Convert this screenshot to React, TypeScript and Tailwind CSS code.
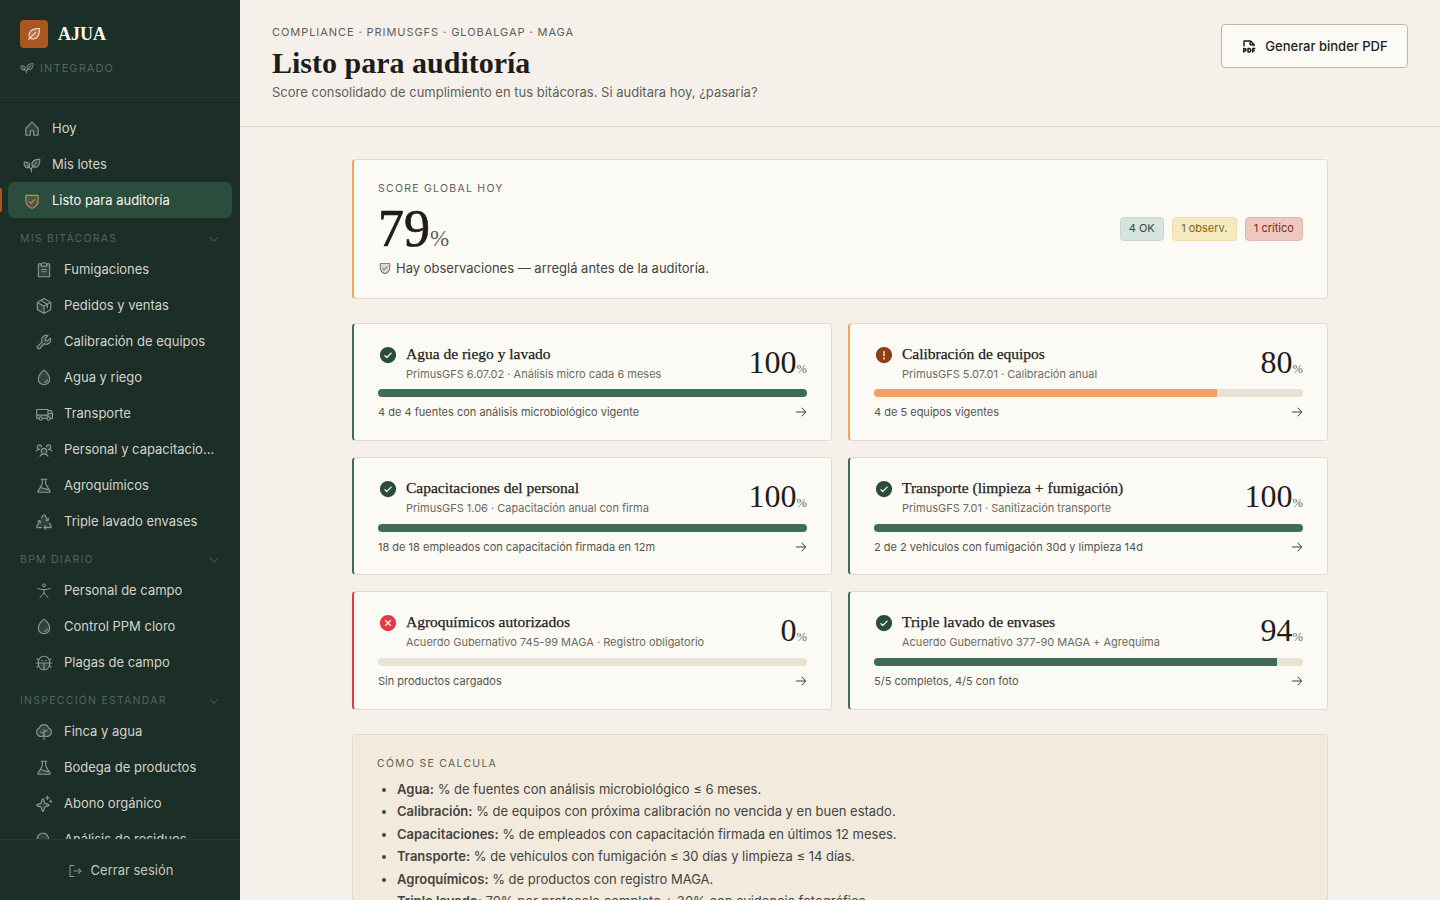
import type { ComponentType, ReactNode } from "react";
import {
  PiArrowRight,
  PiBugDuotone,
  PiCaretDown,
  PiCheckCircleFill,
  PiClipboardTextDuotone,
  PiDropDuotone,
  PiFilePdfBold,
  PiFlaskDuotone,
  PiHouseDuotone,
  PiLeafDuotone,
  PiMagnifyingGlassDuotone,
  PiPackageDuotone,
  PiPlantDuotone,
  PiRecycleDuotone,
  PiShieldCheckDuotone,
  PiSignOut,
  PiSparkleDuotone,
  PiTreeDuotone,
  PiTruckDuotone,
  PiUsersThreeDuotone,
  PiWarningCircleFill,
  PiWrenchDuotone,
  PiXCircleFill,
} from "react-icons/pi";

type Icon = ComponentType<{ className?: string }>;

const sans = "font-['Inter','Liberation_Sans',sans-serif]";
const serif = "font-['Liberation_Serif',serif]";

// stick figure with open arms, the icon packs only have a star-like one
function FieldWorker({ className }: { className?: string }) {
  return (
    <svg viewBox="0 0 24 24" fill="none" stroke="currentColor" strokeWidth="1.3" strokeLinecap="round" strokeLinejoin="round" className={className}>
      <circle cx="12" cy="4.5" r="2" />
      <path d="M3.5 8.5c5.5 2.4 11.5 2.4 17 0" />
      <path d="M12 10.2V14.5" />
      <path d="M12 14.5l-5.5 6.5" />
      <path d="M12 14.5l5.5 6.5" />
    </svg>
  );
}

const sections: { title: string; items: [string, Icon][] }[] = [
  {
    title: "MIS BITÁCORAS",
    items: [
      ["Fumigaciones", PiClipboardTextDuotone],
      ["Pedidos y ventas", PiPackageDuotone],
      ["Calibración de equipos", PiWrenchDuotone],
      ["Agua y riego", PiDropDuotone],
      ["Transporte", PiTruckDuotone],
      ["Personal y capacitaciones", PiUsersThreeDuotone],
      ["Agroquímicos", PiFlaskDuotone],
      ["Triple lavado envases", PiRecycleDuotone],
    ],
  },
  {
    title: "BPM DIARIO",
    items: [
      ["Personal de campo", FieldWorker],
      ["Control PPM cloro", PiDropDuotone],
      ["Plagas de campo", PiBugDuotone],
    ],
  },
  {
    title: "INSPECCIÓN ESTÁNDAR",
    items: [
      ["Finca y agua", PiTreeDuotone],
      ["Bodega de productos", PiFlaskDuotone],
      ["Abono orgánico", PiSparkleDuotone],
      ["Análisis de residuos", PiMagnifyingGlassDuotone],
    ],
  },
];

type Status = "ok" | "warn" | "bad";

const checks: { title: string; sub: string; pct: number; note: string; status: Status }[] = [
  { title: "Agua de riego y lavado", sub: "PrimusGFS 6.07.02 · Análisis micro cada 6 meses", pct: 100, note: "4 de 4 fuentes con análisis microbiológico vigente", status: "ok" },
  { title: "Calibración de equipos", sub: "PrimusGFS 5.07.01 · Calibración anual", pct: 80, note: "4 de 5 equipos vigentes", status: "warn" },
  { title: "Capacitaciones del personal", sub: "PrimusGFS 1.06 · Capacitación anual con firma", pct: 100, note: "18 de 18 empleados con capacitación firmada en 12m", status: "ok" },
  { title: "Transporte (limpieza + fumigación)", sub: "PrimusGFS 7.01 · Sanitización transporte", pct: 100, note: "2 de 2 vehículos con fumigación 30d y limpieza 14d", status: "ok" },
  { title: "Agroquímicos autorizados", sub: "Acuerdo Gubernativo 745-99 MAGA · Registro obligatorio", pct: 0, note: "Sin productos cargados", status: "bad" },
  { title: "Triple lavado de envases", sub: "Acuerdo Gubernativo 377-90 MAGA + Agrequima", pct: 94, note: "5/5 completos, 4/5 con foto", status: "ok" },
];

const statusStyle = {
  ok: { edge: "border-l-[#3f6b57]", bar: "bg-[#3f6b57]", icon: PiCheckCircleFill, color: "text-[#2a4d3e]" },
  warn: { edge: "border-l-[#f4a261]", bar: "bg-[#f4a261]", icon: PiWarningCircleFill, color: "text-[#8c3f10]" },
  bad: { edge: "border-l-[#e63946]", bar: "bg-[#e63946]", icon: PiXCircleFill, color: "text-[#e63946]" },
};

const rules: [string, string][] = [
  ["Agua:", "% de fuentes con análisis microbiológico ≤ 6 meses."],
  ["Calibración:", "% de equipos con próxima calibración no vencida y en buen estado."],
  ["Capacitaciones:", "% de empleados con capacitación firmada en últimos 12 meses."],
  ["Transporte:", "% de vehículos con fumigación ≤ 30 días y limpieza ≤ 14 días."],
  ["Agroquímicos:", "% de productos con registro MAGA."],
  ["Triple lavado:", "70% por protocolo completo + 30% con evidencia fotográfica."],
];

function NavRow({ label, icon: Icon, indent }: { label: string; icon: Icon; indent?: boolean }) {
  return (
    <div className={`flex h-9 items-center gap-[11px] rounded-md pr-3 text-[13px] text-[#d6d3ca] ${indent ? "pl-[27px]" : "pl-[15px]"}`}>
      <Icon className="h-[18px] w-[18px] shrink-0 text-[#8b9a92]" />
      <span className="truncate">{label}</span>
    </div>
  );
}

function Pill({ className, children }: { className: string; children: ReactNode }) {
  return <span className={`flex h-6 items-center rounded-[4px] border px-[8.2px] pb-[1px] text-[11px] ${className}`}>{children}</span>;
}

function Sidebar() {
  return (
    <aside className="flex h-full w-60 shrink-0 flex-col bg-[#1b2e27]">
      <div className="h-[98px] shrink-0 border-b border-[#26392f] px-5 pt-5">
        <div className="flex items-center gap-2.5">
          <div className="flex h-7 w-7 items-center justify-center rounded bg-[#a9561f]">
            <PiLeafDuotone className="h-4 w-4 text-[#f5f1ea]" />
          </div>
          <span className={`${serif} text-[18px] font-bold leading-7 text-[#faf8f2]`}>AJUA</span>
        </div>
        <div className="mt-[11px] flex items-center gap-1.5 text-[11px] leading-[18px] tracking-[0.1em] text-[#55645c]">
          <PiPlantDuotone className="h-3.5 w-3.5 text-[#7d8d85]" />
          INTEGRADO
        </div>
      </div>
      <nav className="min-h-0 flex-1 overflow-hidden px-2 pt-3">
        <div className="pt-[1px]">
          <NavRow label="Hoy" icon={PiHouseDuotone} />
        </div>
        <NavRow label="Mis lotes" icon={PiPlantDuotone} />
        <div className="relative -mt-[1px] pb-[1px]">
          <div className="absolute -left-2 top-1.5 h-6 w-0.5 rounded-r bg-[#a9561f]" />
          <div className="flex h-9 items-center gap-[11px] rounded-md bg-[#2a4d3e] pl-[15px] pr-3 pt-[1px] text-[13px] text-[#faf8f2]">
            <PiShieldCheckDuotone className="h-[18px] w-[18px] text-[#c98a5e]" />
            Listo para auditoría
          </div>
        </div>
        {sections.map((s) => (
          <div key={s.title}>
            <div className="mt-[6px] flex h-[23px] items-center justify-between pl-3 pr-3 pt-[5px] text-[10.5px] tracking-[0.12em] text-[#55645c]">
              {s.title}
              <PiCaretDown className="h-3 w-3" />
            </div>
            <div className="mt-[4px]">
              {s.items.map(([label, icon]) => (
                <NavRow key={label} label={label} icon={icon} indent />
              ))}
            </div>
          </div>
        ))}
      </nav>
      <div className="flex h-[61px] shrink-0 items-center justify-center gap-2 border-t border-[#26392f] pt-[1px] text-[13px] text-[#c7c8bf]">
        <PiSignOut className="h-4 w-4 text-[#8b9a92]" />
        Cerrar sesión
      </div>
    </aside>
  );
}

function CheckCard({ c }: { c: (typeof checks)[number] }) {
  const st = statusStyle[c.status];
  const StatusIcon = st.icon;
  return (
    <div className={`rounded-[4px] border border-l-2 border-[#e2dccd] bg-[#fbfaf5] px-6 pb-[18.8px] pt-5 ${st.edge}`}>
      <div className="flex h-[39px] items-start justify-between">
        <div className="flex gap-2">
          <StatusIcon className={`mt-[1px] h-5 w-5 shrink-0 ${st.color}`} />
          <div>
            <div className={`${serif} text-[15.5px] leading-[20px] text-[#1d1d1b] [-webkit-text-stroke:0.25px_#1d1d1b]`}>{c.title}</div>
            <div className="mt-[1px] text-[11px] leading-[18px] text-[#6b6b63]">{c.sub}</div>
          </div>
        </div>
        <div className={`${serif} -mt-[0.4px] flex h-[38px] items-baseline leading-[36px] text-[#1d1d1b]`}>
          <span className="text-[32px]">{c.pct}</span>
          <span className="text-[12.5px] text-[#6b6b63]">%</span>
        </div>
      </div>
      <div className="mt-[6.4px] h-2 overflow-hidden rounded bg-[#e9e3d3]">
        <div className={`h-full ${st.bar}`} style={{ width: `${c.pct}%` }} />
      </div>
      <div className="mt-[6px] flex items-center justify-between text-[11px] leading-[18px] text-[#55554e]">
        {c.note}
        <PiArrowRight className="h-3.5 w-3.5 translate-x-[1px] text-[#44443f]" />
      </div>
    </div>
  );
}

export default function App() {
  return (
    <div className={`${sans} flex h-[900px] w-full overflow-hidden bg-[#f5f1ea] text-[#1d1d1b]`}>
      <Sidebar />
      <main className="min-w-0 flex-1 overflow-hidden">
        <header className="flex h-[127px] items-start justify-between border-b border-[#e2dccd] px-8 pt-6">
          <div>
            <div className="text-[11px] leading-4 tracking-[0.085em] text-[#5f5f58]">COMPLIANCE · PRIMUSGFS · GLOBALGAP · MAGA</div>
            <h1 className={`${serif} mt-[4px] text-[30px] font-semibold leading-[38px] text-[#1d1d1b]`}>Listo para auditoría</h1>
            <p className="text-[13px] leading-5 text-[#5f5f58]">Score consolidado de cumplimiento en tus bitácoras. Si auditara hoy, ¿pasaría?</p>
          </div>
          <button className="flex h-11 w-[187px] items-center justify-center gap-2 rounded border border-[#bfb7a0] bg-[#fbfaf5] pt-[1px] text-[13px] font-medium text-[#1d1d1b]">
            <PiFilePdfBold className="h-4 w-4" />
            Generar binder PDF
          </button>
        </header>
        <div className="mx-auto flex w-[976px] flex-col gap-6 pt-8">
          <section className="flex h-[140px] items-center justify-between rounded-[4px] border border-l-2 border-[#e2dccd] border-l-[#f4a261] bg-[#fbfaf5] px-6">
            <div className="flex h-full flex-col pt-[21px]">
              <div className="text-[10.5px] leading-4 tracking-[0.12em] text-[#5f5f58]">SCORE GLOBAL HOY</div>
              <div className={`${serif} mt-[7px] flex h-[50px] items-baseline leading-[50px] text-[#1d1d1b]`}>
                <span className="text-[52px] [-webkit-text-stroke:0.7px_#1d1d1b]">79</span>
                <span className="text-[23px] text-[#5f5f58]">%</span>
              </div>
              <div className="mt-[4px] flex items-center gap-1 text-[13px] leading-5 text-[#44443f]">
                <PiShieldCheckDuotone className="h-3.5 w-3.5 text-[#5f5f58]" />
                Hay observaciones — arreglá antes de la auditoría.
              </div>
            </div>
            <div className="flex gap-2">
              <Pill className="border-[#c5d8cf] bg-[#d7e4dd] text-[#2a4d3e]">4 OK</Pill>
              <Pill className="border-[#eddca3] bg-[#f5e9c0] text-[#86650f]">1 observ.</Pill>
              <Pill className="border-[#e0b6ae] bg-[#eec7bf] text-[#7a2a20]">1 crítico</Pill>
            </div>
          </section>
          <div className="grid grid-cols-2 gap-4">
            {checks.map((c) => (
              <CheckCard key={c.title} c={c} />
            ))}
          </div>
          <section className="rounded-[4px] border border-[#e2dccd] bg-[#f1eadd] px-6 pb-6 pt-[21px]">
            <div className="text-[10.5px] leading-4 tracking-[0.12em] text-[#5f5f58]">CÓMO SE CALCULA</div>
            <ul className="mt-[6px] list-disc pl-5 text-[13px] leading-[22.5px] text-[#44443f]">
              {rules.map(([k, v]) => (
                <li key={k}>
                  <strong className="font-semibold">{k}</strong> {v}
                </li>
              ))}
            </ul>
          </section>
        </div>
      </main>
    </div>
  );
}
